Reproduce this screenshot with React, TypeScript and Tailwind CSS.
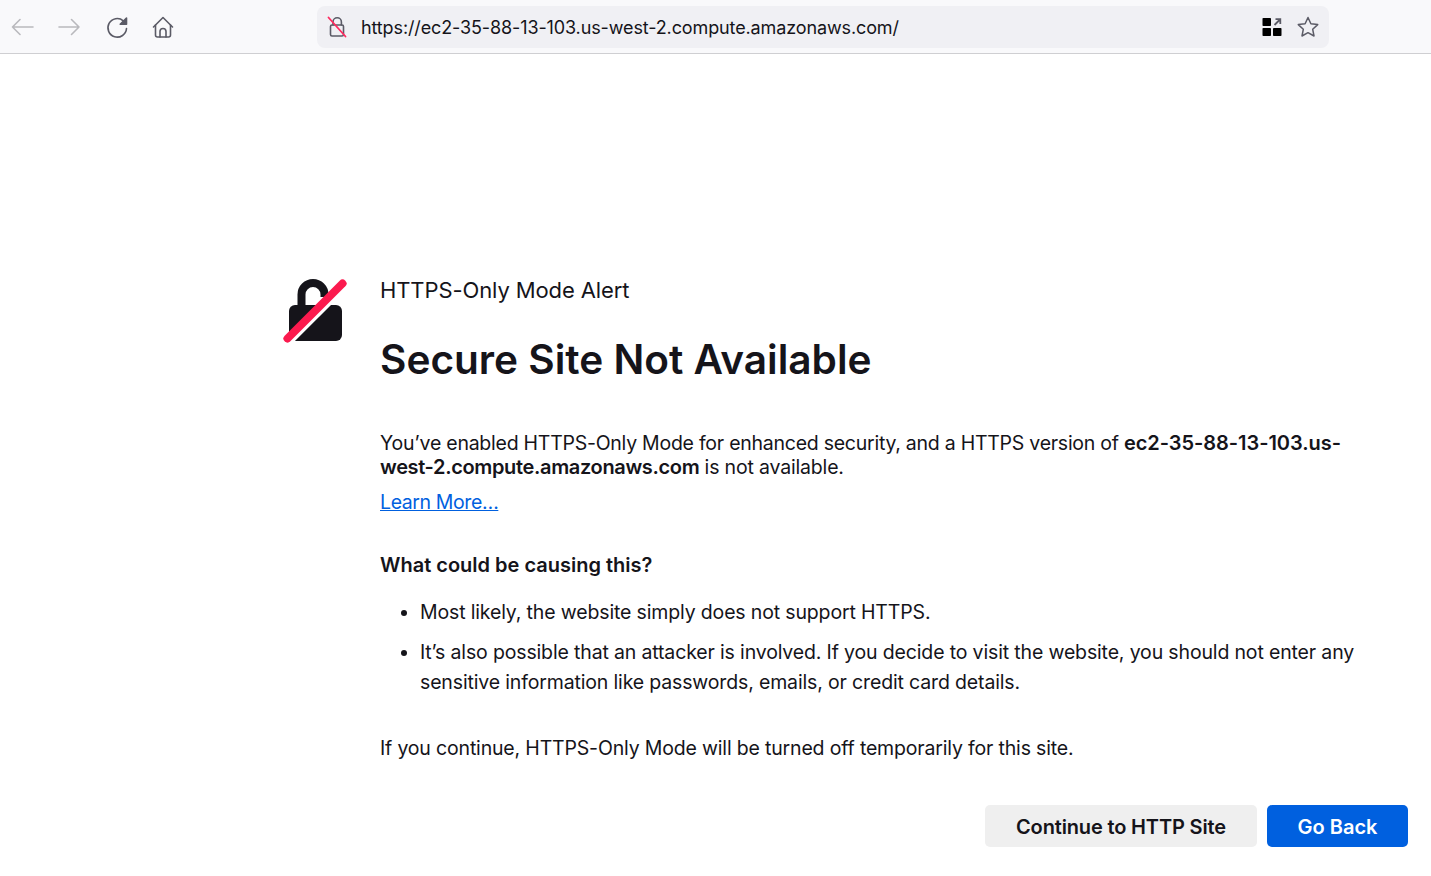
function NavIcon({ children, className }: { children: React.ReactNode; className: string }) {
  return (
    <svg viewBox="0 0 24 24" fill="none" stroke="currentColor" strokeWidth="1.6" strokeLinecap="round" strokeLinejoin="round" className={className}>
      {children}
    </svg>
  );
}

function Toolbar() {
  return (
    <div className="h-[54px] flex items-center bg-[#f9f9fb] border-b border-[#cfcfd2] shrink-0">
      <div className="w-[317px] shrink-0 flex items-center pl-[11px] gap-[23px]">
        <NavIcon className="w-6 h-6 text-[#b9b9bd]">
          <path d="M22 12H1.500M9 4.500 1.500 12 9 19.500" />
        </NavIcon>
        <NavIcon className="w-6 h-6 -ml-px text-[#b9b9bd]">
          <path d="M2 12h20M14.500 4.500 22 12l-7.500 7.500" />
        </NavIcon>
        <NavIcon className="w-6 h-6 ml-px text-[#5b5b66]">
          <path d="M21.500 13.500a9.300 9.300 0 1 1-3.200-7.700" />
          <path d="M21.500 3v6.300h-6.300z" fill="currentColor" />
        </NavIcon>
        <NavIcon className="w-6 h-6 -ml-px text-[#5b5b66]">
          <path d="M2.500 12 12 2.500 21.500 12" />
          <path d="M4.500 10v10a2 2 0 0 0 2 2h11a2 2 0 0 0 2-2V10" />
          <path d="M9 22v-5.500a3 3 0 0 1 6 0V22" />
        </NavIcon>
      </div>
      <div className="w-[1012px] h-[42px] rounded-lg bg-[#f0f0f4] flex items-center pl-[8px] pr-[9px]">
        <svg viewBox="0 0 24 24" className="w-6 h-6 shrink-0" fill="none" strokeLinecap="round">
          <path d="M8 10V7a4.200 4.200 0 0 1 8.400 0v3" stroke="#5b5b66" strokeWidth="1.600" />
          <rect x="5.500" y="10" width="13" height="11" rx="1.500" stroke="#5b5b66" strokeWidth="1.600" />
          <path d="M3.500 2.500 20.500 21.500" stroke="#ff2a5f" strokeWidth="1.800" />
        </svg>
        <span className="ml-[12px] pt-px text-[18px] text-[#15141a] flex-1 tracking-[-0.12px]">https://ec2-35-88-13-103.us-west-2.compute.amazonaws.com/</span>
        <svg viewBox="0 0 20 20" className="w-5 h-5 shrink-0">
          <rect x="0.500" y="1" width="8.500" height="8" rx="0.800" fill="#000" />
          <rect x="0.500" y="11" width="8.500" height="8" rx="0.800" fill="#000" />
          <rect x="11" y="11" width="8.500" height="8" rx="0.800" fill="#000" />
          <path d="M12.500 8 18 2.500M13.500 2.200h4.800V7" stroke="#5b5b66" strokeWidth="1.800" fill="none" />
        </svg>
        <svg viewBox="0 0 24 24" className="w-6 h-6 ml-[14px] shrink-0 text-[#5b5b66]" fill="none" stroke="currentColor" strokeWidth="1.500" strokeLinejoin="round">
          <path d="M12 2.500l2.900 6.200 6.800.9-5 4.700 1.300 6.700-6-3.300-6 3.300 1.300-6.700-5-4.700 6.800-.9z" />
        </svg>
      </div>
    </div>
  );
}

function AlertIcon() {
  return (
    <svg viewBox="0 0 64 64" className="w-16 h-16 mt-px shrink-0">
      <path d="M18.500 28V15.500A11.500 11.500 0 0 1 41.500 15.500V18" fill="none" stroke="#15141a" strokeWidth="8" />
      <rect x="6" y="26" width="53" height="36" rx="6" fill="#15141a" />
      <path d="M-2 66 66 -2" stroke="#fff" strokeWidth="7" transform="translate(2.500 2.500)" />
      <path d="M4.500 59.500 59.500 4.500" stroke="#fb1a4e" strokeWidth="8" strokeLinecap="round" />
    </svg>
  );
}

export default function App() {
  return (
    <div className="w-[1431px] h-[876px] overflow-hidden bg-white flex flex-col font-['Inter',sans-serif] text-[#15141a]">
      <Toolbar />
      <main className="flex pl-[283px] pt-[224px] pr-[23px] gap-[33px]">
        <AlertIcon />
        <div className="flex-1 min-w-0">
          <p className="text-[22px] leading-[24px] tracking-[-0.1px]">HTTPS-Only Mode Alert</p>
          <h1 className="mt-[34px] text-[40.6px] leading-[48px] font-semibold">Secure Site Not Available</h1>
          <p className="mt-[47px] text-[19.5px] leading-[24px] tracking-[-0.25px] pr-[60px]">
            You’ve enabled HTTPS-Only Mode for enhanced security, and a HTTPS version of <b className="font-semibold text-[20px] tracking-[-0.05px]">ec2-35-88-13-103.us-</b><b className="font-semibold text-[20px] tracking-[-0.35px]">west-2.compute.amazonaws.com</b><span className="tracking-[-0.17px]"> is not available.</span>
          </p>
          <a href="#" className="block mt-[11px] text-[19.5px] leading-[24px] tracking-[-0.4px] text-[#0060df] underline">Learn More…</a>
          <h2 className="mt-[39px] text-[20px] leading-[24px] font-semibold">What could be causing this?</h2>
          <ul className="mt-[20px] list-disc pl-[40px] text-[19.5px] leading-[30px] tracking-[-0.15px]">
            <li>Most likely, the website simply does not support HTTPS.</li>
            <li className="mt-[10px]">It’s also possible that an attacker is involved. If you decide to visit the website, you should not enter any sensitive information like passwords, emails, or credit card details.</li>
          </ul>
          <p className="mt-[39px] text-[19.5px] leading-[24px] tracking-[-0.17px]">If you continue, HTTPS-Only Mode will be turned off temporarily for this site.</p>
          <div className="mt-[45px] flex justify-end gap-[10px]">
            <button className="h-[42px] w-[272px] pt-px rounded-[5px] bg-[#efefef] text-[20px] font-semibold tracking-[-0.15px]">Continue to HTTP Site</button>
            <button className="h-[42px] w-[141px] pt-px rounded-[5px] bg-[#0060df] text-white text-[20px] font-semibold">Go Back</button>
          </div>
        </div>
      </main>
    </div>
  );
}
